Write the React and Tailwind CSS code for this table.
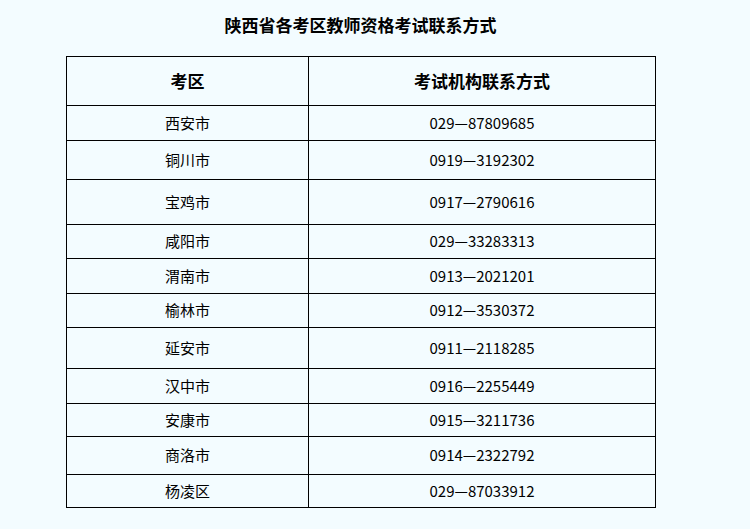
import React from 'react';

const rows = [
    ['西安市', '029—87809685', 35],
    ['铜川市', '0919—3192302', 39],
    ['宝鸡市', '0917—2790616', 45],
    ['咸阳市', '029—33283313', 34],
    ['渭南市', '0913—2021201', 35],
    ['榆林市', '0912—3530372', 34],
    ['延安市', '0911—2118285', 41],
    ['汉中市', '0916—2255449', 35],
    ['安康市', '0915—3211736', 33],
    ['商洛市', '0914—2322792', 38],
    ['杨凌区', '029—87033912', 33],
];

const App = () => {
    return (
        <div className="min-h-screen bg-[#f3fcff] pt-[16px] font-['Noto_Sans_CJK_SC',sans-serif] text-black">
            <div className="ml-[66px] w-[589px]">
                {/* Title */}
                <h1 className="text-center text-[17px] leading-[18px] font-bold">
                    陕西省各考区教师资格考试联系方式
                </h1>

                {/* Table */}
                <table className="mt-[22px] w-[589px] table-fixed border-collapse border border-black">
                    <colgroup>
                        <col className="w-[242px]" />
                        <col className="w-[347px]" />
                    </colgroup>
                    <thead>
                        <tr>
                            <th className="h-[49px] border border-black p-0 text-center text-[17px] font-bold">考区</th>
                            <th className="h-[49px] border border-black p-0 text-center text-[17px] font-bold">考试机构联系方式</th>
                        </tr>
                    </thead>
                    <tbody>
                        {rows.map(([city, phone, h]) => (
                            <tr key={city} style={{ height: h }}>
                                <td className="border border-black p-0 text-center text-[15px]">{city}</td>
                                <td className="border border-black p-0 text-center text-[15px]">{phone}</td>
                            </tr>
                        ))}
                    </tbody>
                </table>
            </div>
        </div>
    );
};

export default App;
